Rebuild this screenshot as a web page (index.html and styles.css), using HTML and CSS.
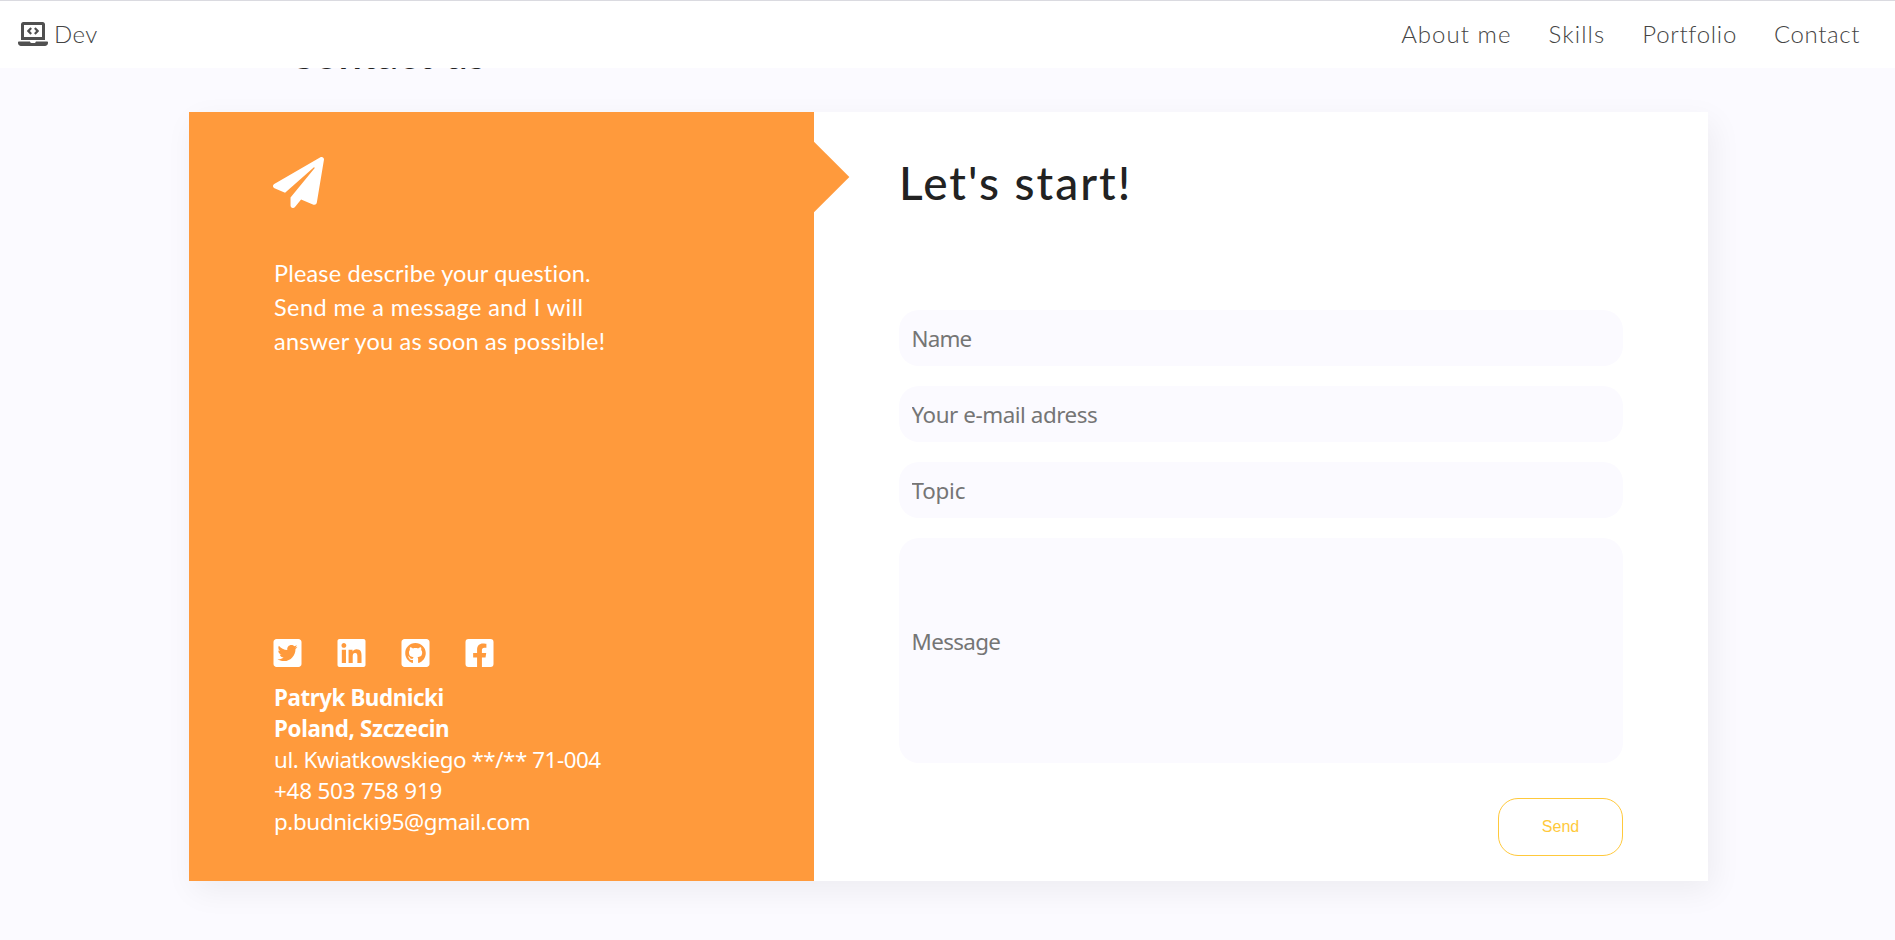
FILE: index.html
```html
<!DOCTYPE html>
<html lang="en">
<head>
<meta charset="utf-8">
<title>Dev</title>
<link rel="stylesheet" href="styles.css">
</head>
<body>
<header class="navbar">
  <a class="brand">
    <svg class="brand-icon" viewBox="0 0 640 512"><path d="M255.03 261.65c6.25 6.25 16.38 6.25 22.63 0l11.31-11.31c6.25-6.25 6.25-16.38 0-22.63L253.25 192l35.71-35.72c6.25-6.25 6.25-16.38 0-22.63l-11.31-11.31c-6.25-6.25-16.38-6.25-22.63 0l-58.34 58.34c-6.25 6.25-6.25 16.38 0 22.63l58.35 58.34zm96.01-11.3l11.31 11.31c6.25 6.25 16.38 6.25 22.63 0l58.34-58.34c6.25-6.25 6.25-16.38 0-22.63l-58.34-58.34c-6.25-6.25-16.38-6.25-22.63 0l-11.31 11.31c-6.25 6.25-6.25 16.38 0 22.63L386.75 192l-35.71 35.72c-6.25 6.25-6.25 16.38 0 22.63zM624 416H381.54c-.74 19.81-14.71 32-32.74 32H288c-18.69 0-33.02-17.47-32.77-32H16c-8.8 0-16 7.2-16 16v16c0 35.2 28.8 64 64 64h512c35.2 0 64-28.8 64-64v-16c0-8.8-7.2-16-16-16zM576 48c0-26.4-21.6-48-48-48H112C85.6 0 64 21.6 64 48v336h512V48zm-64 272H128V64h384v256z"/></svg>
    <span class="brand-name">Dev</span>
  </a>
  <nav class="links">
    <a class="link about">About me</a>
    <a class="link skills">Skills</a>
    <a class="link portfolio">Portfolio</a>
    <a class="link contact-link">Contact</a>
  </nav>
</header>
<main class="contact">
  <h2 class="section-title">Contact us</h2>
  <section class="card">
    <div class="info">
      <svg class="plane" viewBox="0 0 512 512"><path d="M476 3.2L12.5 270.6c-18.1 10.4-15.8 35.6 2.2 43.2L121 358.4l287.3-253.2c5.5-4.9 13.3 2.6 8.6 8.3L176 407v80.5c0 23.6 28.5 32.9 42.5 15.8L282 426l124.6 52.2c14.2 6 30.4-2.9 33-18.2l72-432C515 7.8 493.3-6.8 476 3.2z"/></svg>
      <p class="intro">Please describe your question.<br><span class="intro-mid">Send me a message and I will</span><br><span class="intro-end">answer you as soon as possible!</span></p>
      <div class="socials">
        <svg class="social" viewBox="0 32 448 448"><path d="M400 32H48C21.5 32 0 53.5 0 80v352c0 26.5 21.5 48 48 48h352c26.5 0 48-21.5 48-48V80c0-26.5-21.5-48-48-48zm-48.9 158.8c.2 2.8.2 5.7.2 8.5 0 86.7-66 186.6-186.6 186.6-37.2 0-71.7-10.8-100.7-29.4 5.3.6 10.4.8 15.8.8 30.7 0 58.9-10.4 81.4-28-28.8-.6-53-19.5-61.3-45.5 10.1 1.5 19.2 1.5 29.6-1.2-30-6.1-52.5-32.5-52.5-64.4v-.8c8.7 4.9 18.9 7.9 29.6 8.3a65.447 65.447 0 0 1-29.2-54.6c0-12.2 3.2-23.4 8.9-33.1 32.3 39.8 80.8 65.8 135.2 68.6-9.3-44.5 24-80.6 64-80.6 18.9 0 35.9 7.9 47.9 20.7 14.8-2.8 29-8.3 41.6-15.8-4.9 15.2-15.2 28-28.8 36.1 13.2-1.4 26-5.1 37.8-10.2-8.9 13.1-20.1 24.7-32.9 34z"/></svg>
        <svg class="social" viewBox="0 32 448 448"><path d="M416 32H31.9C14.3 32 0 46.5 0 64.3v383.4C0 465.5 14.3 480 31.9 480H416c17.6 0 32-14.5 32-32.3V64.3c0-17.8-14.4-32.3-32-32.3zM135.4 416H69V202.2h66.5V416zm-33.2-243c-21.3 0-38.5-17.3-38.5-38.5S80.9 96 102.2 96c21.2 0 38.5 17.3 38.5 38.5 0 21.3-17.2 38.5-38.5 38.5zm282.1 243h-66.4V312c0-24.8-.5-56.7-34.5-56.7-34.6 0-39.9 27-39.9 54.9V416h-66.4V202.2h63.7v29.2h.9c8.9-16.8 30.6-34.5 62.9-34.5 67.2 0 79.7 44.3 79.7 101.9V416z"/></svg>
        <svg class="social" viewBox="0 32 448 448"><path d="M400 32H48C21.5 32 0 53.5 0 80v352c0 26.5 21.5 48 48 48h352c26.5 0 48-21.5 48-48V80c0-26.5-21.5-48-48-48zM277.3 415.7c-8.4 1.5-11.5-3.7-11.5-8 0-5.4.2-33 .2-55.3 0-15.6-5.2-25.5-11.3-30.7 37-4.1 76-9.2 76-73.1 0-18.2-6.5-27.3-17.1-39 1.7-4.3 7.4-22-1.7-45-13.9-4.3-45.7 17.9-45.7 17.9-13.2-3.7-27.5-5.6-41.6-5.6-14.1 0-28.4 1.9-41.6 5.6 0 0-31.8-22.2-45.7-17.9-9.1 22.9-3.5 40.6-1.7 45-10.6 11.7-15.6 20.8-15.6 39 0 63.6 37.3 69 74.3 73.1-4.8 4.3-9.1 11.7-10.6 22.3-9.5 4.3-33.8 11.7-48.3-13.9-9.1-15.8-25.5-17.1-25.5-17.1-16.2-.2-1.1 10.2-1.1 10.2 10.8 5 18.4 24.2 18.4 24.2 9.7 29.7 56.1 19.7 56.1 19.7 0 13.9.2 36.5.2 40.6 0 4.3-3 9.5-11.5 8-66-22.1-112.2-84.9-112.2-158.3 0-91.8 70.2-161.5 162-161.5S388 165.6 388 257.4c.1 73.4-44.7 136.3-110.7 158.3z"/></svg>
        <svg class="social" viewBox="0 32 448 448"><path d="M400 32H48A48 48 0 0 0 0 80v352a48 48 0 0 0 48 48h137.25V327.69h-63V256h63v-54.64c0-62.15 37-96.48 93.67-96.48 27.14 0 55.52 4.84 55.52 4.84v61h-31.27c-30.81 0-40.42 19.12-40.42 38.73V256h68.78l-11 71.69h-57.78V480H400a48 48 0 0 0 48-48V80a48 48 0 0 0-48-48z"/></svg>
      </div>
      <address class="address">
        <strong class="person">Patryk Budnicki</strong>
        <strong class="city">Poland, Szczecin</strong>
        <span class="street">ul. Kwiatkowskiego **/** 71-004</span>
        <span class="phone">+48 503 758 919</span>
        <span class="mail">p.budnicki95@gmail.com</span>
      </address>
    </div>
    <form class="form">
      <h3 class="form-title">Let's start!</h3>
      <input class="field name" type="text" placeholder="Name">
      <input class="field email" type="text" placeholder="Your e-mail adress">
      <input class="field topic" type="text" placeholder="Topic">
      <input class="field message" type="text" placeholder="Message">
      <button class="send" type="button">Send</button>
    </form>
  </section>
</main>
</body>
</html>
```
FILE: styles.css
```css
* { box-sizing: border-box; }
body {
  margin: 0;
  height: 940px;
  overflow: hidden;
  background: #fbfaff;
  font-family: Lato, "Open Sans", sans-serif;
}
.navbar {
  position: fixed;
  inset: 0 0 auto 0;
  z-index: 2;
  height: 68px;
  padding: 0 35px 2px 18px;
  border-top: 1px solid #dadae0;
  background: #fff;
  display: flex;
  align-items: center;
  justify-content: space-between;
  color: #444;
  font-size: 24px;
  font-weight: 300;
}
.brand { display: flex; align-items: center; gap: 6px; }
.brand-icon { width: 30px; height: 24px; fill: #505050; }
.brand-name { letter-spacing: 0.4px; }
.links { display: flex; gap: 37px; }
.link { white-space: nowrap; }
.about { letter-spacing: 1.05px; }
.skills { letter-spacing: 1.1px; }
.portfolio { letter-spacing: 0.7px; }
.contact-link { letter-spacing: 0.6px; }

.contact { padding: 22px 187px 0 189px; }
.section-title {
  margin: 0 0 30px 98px;
  height: 60px;
  line-height: 60px;
  font-size: 42px;
  font-weight: 600;
  color: #222;
  position: relative;
  top: 1px;
}
.card {
  display: flex;
  height: 769px;
  background: #fff;
  box-shadow: 5px 10px 30px rgba(0, 0, 0, 0.06);
}
.info {
  position: relative;
  width: 625px;
  padding: 45px 84px 0;
  display: flex;
  flex-direction: column;
  background: #ff9a3c;
  color: #fff;
}
.info::after {
  content: "";
  position: absolute;
  top: 40px;
  right: -25px;
  width: 50px;
  height: 50px;
  background: #ff9a3c;
  transform: rotate(45deg);
}
.plane { width: 51px; height: 51px; margin-left: 0.4px; fill: #fff; }
.intro {
  margin: 48px 0 0 1px;
  height: 271px;
  line-height: 34px;
  font-size: 23.5px;
  white-space: nowrap;
  letter-spacing: 0.17px;
}
.intro-mid { letter-spacing: 0.4px; }
.intro-end { letter-spacing: 0.2px; }
.socials { margin: 112px 0 0 0.3px; display: flex; gap: 35px; }
.social { width: 29px; height: 28px; fill: #fff; }
.address {
  margin: 15px 0 0 1px;
  display: flex;
  flex-direction: column;
  line-height: 31px;
  font-family: "Noto Sans", sans-serif;
  font-size: 22.4px;
  font-style: normal;
  white-space: nowrap;
}
.person { letter-spacing: -0.45px; }
.city { letter-spacing: -0.36px; }
.street { letter-spacing: -0.46px; }
.phone { letter-spacing: -0.2px; }
.mail { letter-spacing: -0.4px; }
.form {
  flex: 1;
  padding: 41px 85px 0;
  display: flex;
  flex-direction: column;
}
.form-title {
  margin: 0 0 97px;
  height: 60px;
  line-height: 60px;
  font-size: 46px;
  font-weight: 500;
  color: #222;
  letter-spacing: 2px;
}
.field {
  height: 56px;
  margin: 0 0 20px;
  padding: 0 12.5px;
  border: 0;
  border-radius: 20px;
  background: #fbfaff;
  font-family: "Noto Sans", sans-serif;
  font-size: 22.4px;
}
.field::placeholder { color: #757575; }
.name { letter-spacing: -0.8px; }
.email { letter-spacing: -0.45px; }
.topic { letter-spacing: -0.2px; }
.message {
  height: 225px;
  margin-bottom: 35px;
  padding-bottom: 18px;
  letter-spacing: -0.65px;
}
.send {
  align-self: flex-end;
  width: 125px;
  height: 58px;
  padding: 0;
  border: 1px solid #ffc93c;
  border-radius: 20px;
  background: #fff;
  color: #ffc93c;
  font: 16px "Liberation Sans", Arial, sans-serif;
}
```
